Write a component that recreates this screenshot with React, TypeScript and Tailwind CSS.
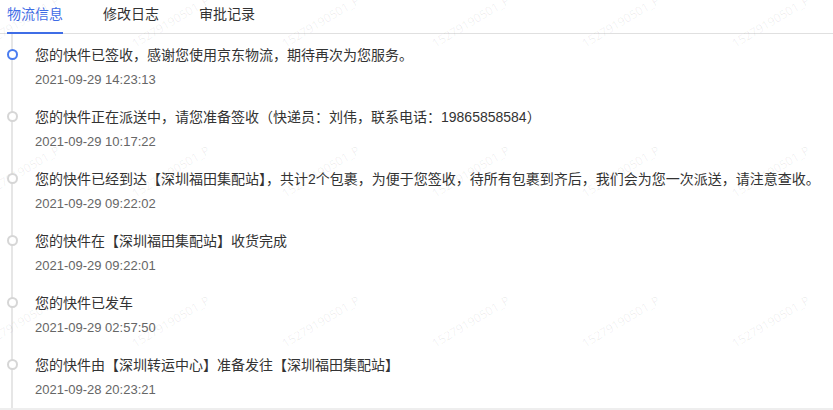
import React from "react"

const tabs = ["物流信息", "修改日志", "审批记录"]

const records = [
  { text: "您的快件已签收，感谢您使用京东物流，期待再次为您服务。", time: "2021-09-29 14:23:13" },
  { text: "您的快件正在派送中，请您准备签收（快递员：刘伟，联系电话：19865858584）", time: "2021-09-29 10:17:22" },
  {
    text: "您的快件已经到达【深圳福田集配站】，共计2个包裹，为便于您签收，待所有包裹到齐后，我们会为您一次派送，请注意查收。",
    time: "2021-09-29 09:22:02",
  },
  { text: "您的快件在【深圳福田集配站】收货完成", time: "2021-09-29 09:22:01" },
  { text: "您的快件已发车", time: "2021-09-29 02:57:50" },
  { text: "您的快件由【深圳转运中心】准备发往【深圳福田集配站】", time: "2021-09-28 20:23:21" },
]

// watermark grid (centres)
const marks: { x: number; y: number }[] = []
for (const y of [22, 172, 322]) {
  for (const x of [21, 171, 321, 471, 621, 771]) marks.push({ x, y })
}

export default function App() {
  return (
    <div className="h-[410px] w-[833px] bg-[#eeeeee] font-['Liberation_Sans','Noto_Sans_CJK_SC',sans-serif]">
      <div className="relative h-[408px] overflow-hidden bg-white">
        {/* tabs */}
        <div className="flex h-[34px] gap-10 border-b border-[#e0e0e0] pl-[7px]">
          {tabs.map((t, i) => (
            <div
              key={t}
              className={
                i === 0
                  ? "relative flex h-full items-start pt-[4px] text-[14px] leading-5 text-[#3f6de6]"
                  : "flex h-full items-start pt-[4px] text-[14px] leading-5 text-[#333333]"
              }
            >
              {t}
              {i === 0 && <span className="absolute -bottom-px left-0 h-[2px] w-full bg-[#3f6de6]" />}
            </div>
          ))}
        </div>

        {/* timeline */}
        <div className="relative">
          <div className="absolute top-0 bottom-[-2px] left-[11px] w-[2px] bg-[#e6e6e6]" />
          {records.map((r, i) => (
            <div key={r.time} className="relative flex h-[62px] pt-[11px]">
              <div className="flex w-[35px] shrink-0 pt-[4px] pl-[7px]">
                <span
                  className={
                    i === 0
                      ? "relative z-10 h-[11px] w-[11px] rounded-full border-2 border-[#4a7cf0] bg-white"
                      : "relative z-10 h-[11px] w-[11px] rounded-full border-2 border-[#d6d6d6] bg-white"
                  }
                />
              </div>
              <div className="flex flex-col">
                <div className="text-[14px] leading-5 whitespace-nowrap text-[#333333]">{r.text}</div>
                <div className="mt-[5px] text-[13px] leading-5 text-[#666666]">{r.time}</div>
              </div>
            </div>
          ))}
        </div>

        {/* watermark */}
        <div className="pointer-events-none absolute inset-0">
          {marks.map((m, i) => (
            <span
              key={i}
              className="absolute -translate-x-1/2 -translate-y-1/2 -rotate-[31deg] font-['Open_Sans',sans-serif] text-[12px] whitespace-nowrap text-black/[0.07]"
              style={{ left: m.x, top: m.y }}
            >
              15279190501_P
            </span>
          ))}
        </div>
      </div>
    </div>
  )
}
